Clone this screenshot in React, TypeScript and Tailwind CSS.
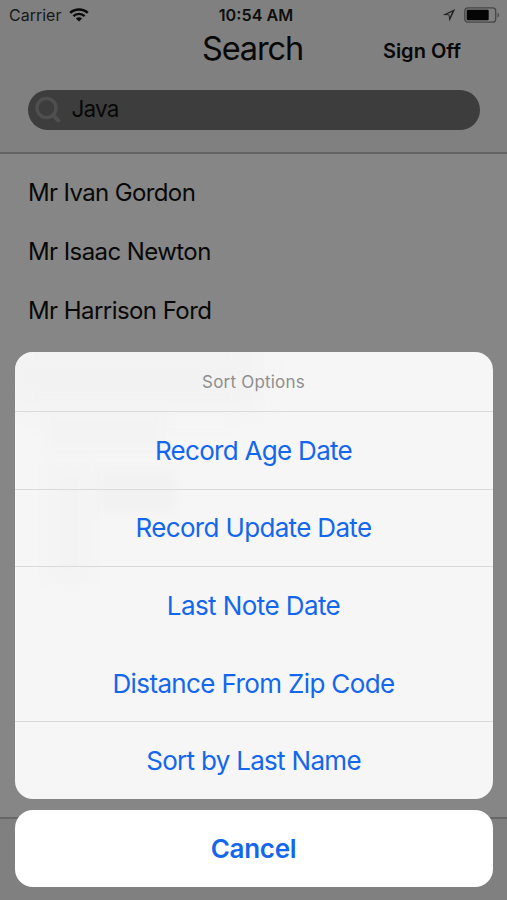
import { useState } from 'react';

interface SortOption {
  label: string;
  tracking: string;
  divider: boolean;
}

const people = [
  { name: 'Mr Ivan Gordon', tracking: 'tracking-[-0.63px]' },
  { name: 'Mr Isaac Newton', tracking: 'tracking-[-0.58px]' },
  { name: 'Mr Harrison Ford', tracking: 'tracking-[-0.56px]' },
];

const sortOptions: SortOption[] = [
  { label: 'Record Age Date', tracking: 'tracking-[-0.7px]', divider: true },
  { label: 'Record Update Date', tracking: 'tracking-[-0.66px]', divider: true },
  { label: 'Last Note Date', tracking: 'tracking-[-0.58px]', divider: true },
  { label: 'Distance From Zip Code', tracking: 'tracking-[-0.63px]', divider: false },
  { label: 'Sort by Last Name', tracking: 'tracking-[-0.7px]', divider: true },
];

function WifiIcon() {
  return (
    <svg className="h-[14px] w-[20px]" viewBox="0 0 20 14" fill="none" stroke="#090909">
      <path d="M1.2 4.9C6 .4 14 .4 18.8 4.9" strokeWidth="2.6" />
      <path d="M4.4 8.1c3.1-3 8.1-3 11.2 0" strokeWidth="2.4" />
      <path d="M10 13.6 6.9 10.5c1.7-1.6 4.5-1.6 6.2 0z" fill="#090909" stroke="none" />
    </svg>
  );
}

function StatusBar() {
  return (
    <div className="grid h-[30px] grid-cols-3 items-center pr-[7px] pl-[9px] text-[#181818]">
      <div className="flex items-center gap-[8px]">
        <span className="text-[16px]">Carrier</span>
        <WifiIcon />
      </div>
      <span className="pl-[3px] text-center text-[16.2px] font-semibold text-[#0e0e0e]">10:54 AM</span>
      <div className="flex items-center justify-end gap-[8px]">
        <svg className="h-[14px] w-[14px]" viewBox="0 0 14 14" fill="none">
          <path
            d="M13.2 1 .6 6.900l6 .400.800 6.100zM10.200 3.900 7.700 8.900l-.300-2.300-2.600-.400z"
            fill="#222"
            fillRule="evenodd"
          />
        </svg>
        <svg className="h-[16px] w-[36px]" viewBox="0 0 36 16" fill="none">
          <rect x=".8" y=".8" width="30.9" height="14.4" rx="3" stroke="#454545" strokeWidth="1.3" />
          <rect x="2.7" y="2.7" width="22" height="10.6" rx="1" fill="#050505" />
          <path d="M33.5 5.7c2.2.7 2.2 3.9 0 4.6z" fill="#4d4d4d" />
        </svg>
      </div>
    </div>
  );
}

function SearchHeader() {
  const [query, setQuery] = useState('Java');

  return (
    <header className="h-[154px] border-b-2 border-[#636363] bg-[#808080]">
      <StatusBar />
      <div className="grid h-[40px] grid-cols-[1fr_auto_1fr] items-center">
        <span />
        <h1 className="-mt-[2px] -ml-[2px] text-[32.5px] leading-[40px] tracking-[-1.1px]">Search</h1>
        <button className="mt-[2px] mr-[46px] justify-self-end text-[20px] font-semibold">Sign Off</button>
      </div>
      <label className="mt-[20px] mr-[27px] ml-[28px] flex h-[40px] items-center rounded-full bg-[#3d3d3d] pl-[7px]">
        <svg className="h-[28px] w-[28px] shrink-0" viewBox="0 0 28 28" fill="none" stroke="#4f4f4f">
          <circle cx="11.5" cy="12" r="9.5" strokeWidth="3.4" />
          <path d="m18 19 6.5 6.8" strokeWidth="4" />
        </svg>
        <input
          className="ml-[8.5px] w-[300px] bg-transparent pb-[2px] text-[22.5px] tracking-[-0.8px] text-[#080808] outline-none"
          value={query}
          onChange={(e) => setQuery(e.target.value)}
        />
      </label>
    </header>
  );
}

function SortSheet() {
  return (
    <div className="absolute inset-x-0 bottom-[13px] mx-[14.5px] flex flex-col gap-[11px] text-[#1366ee]">
      <section className="relative h-[447px] overflow-hidden rounded-[18px] bg-[#f6f6f6]">
        {/* list content showing faintly through the sheet */}
        <div className="absolute -top-2 -left-2 h-[65px] w-[250px] bg-[#f2f2f2] blur-md" />
        <div className="absolute top-[62px] left-[32px] h-[36px] w-[115px] bg-[#f3f3f3] blur-[5px]" />
        <div className="absolute top-[118px] left-[84px] h-[42px] w-[76px] bg-[#f2f2f2] blur-[5px]" />
        <div className="absolute top-[112px] left-[34px] h-[118px] w-[40px] bg-[#f3f3f3] blur-[6px]" />
        <div className="relative flex h-full flex-col">
          <h2 className="flex h-[59px] shrink-0 items-center justify-center pt-[3px] text-[17px] tracking-[0.2px] text-[#8e8e8e]">
            Sort Options
          </h2>
          {sortOptions.map((option) => (
            <button
              key={option.label}
              className={`flex flex-1 items-center justify-center border-t text-[26px] ${option.tracking} ${
                option.divider ? 'border-[#dadada]' : 'border-transparent'
              }`}
            >
              {option.label}
            </button>
          ))}
        </div>
      </section>
      <button className="h-[77px] rounded-[18px] bg-white text-[26px] font-semibold tracking-[-0.3px]">Cancel</button>
    </div>
  );
}

export default function App() {
  return (
    <div className="relative flex h-[900px] w-[507px] flex-col overflow-hidden bg-[#868686] font-[Inter,sans-serif] text-[#080808]">
      <SearchHeader />
      <ul className="flex-1 pt-[9px] pl-[28px]">
        {people.map((person) => (
          <li key={person.name} className={`flex h-[59.3px] items-center text-[24px] ${person.tracking}`}>
            {person.name}
          </li>
        ))}
      </ul>
      <footer className="h-[83px] border-t-2 border-[#676767] bg-[#808080]" />
      <SortSheet />
    </div>
  );
}
